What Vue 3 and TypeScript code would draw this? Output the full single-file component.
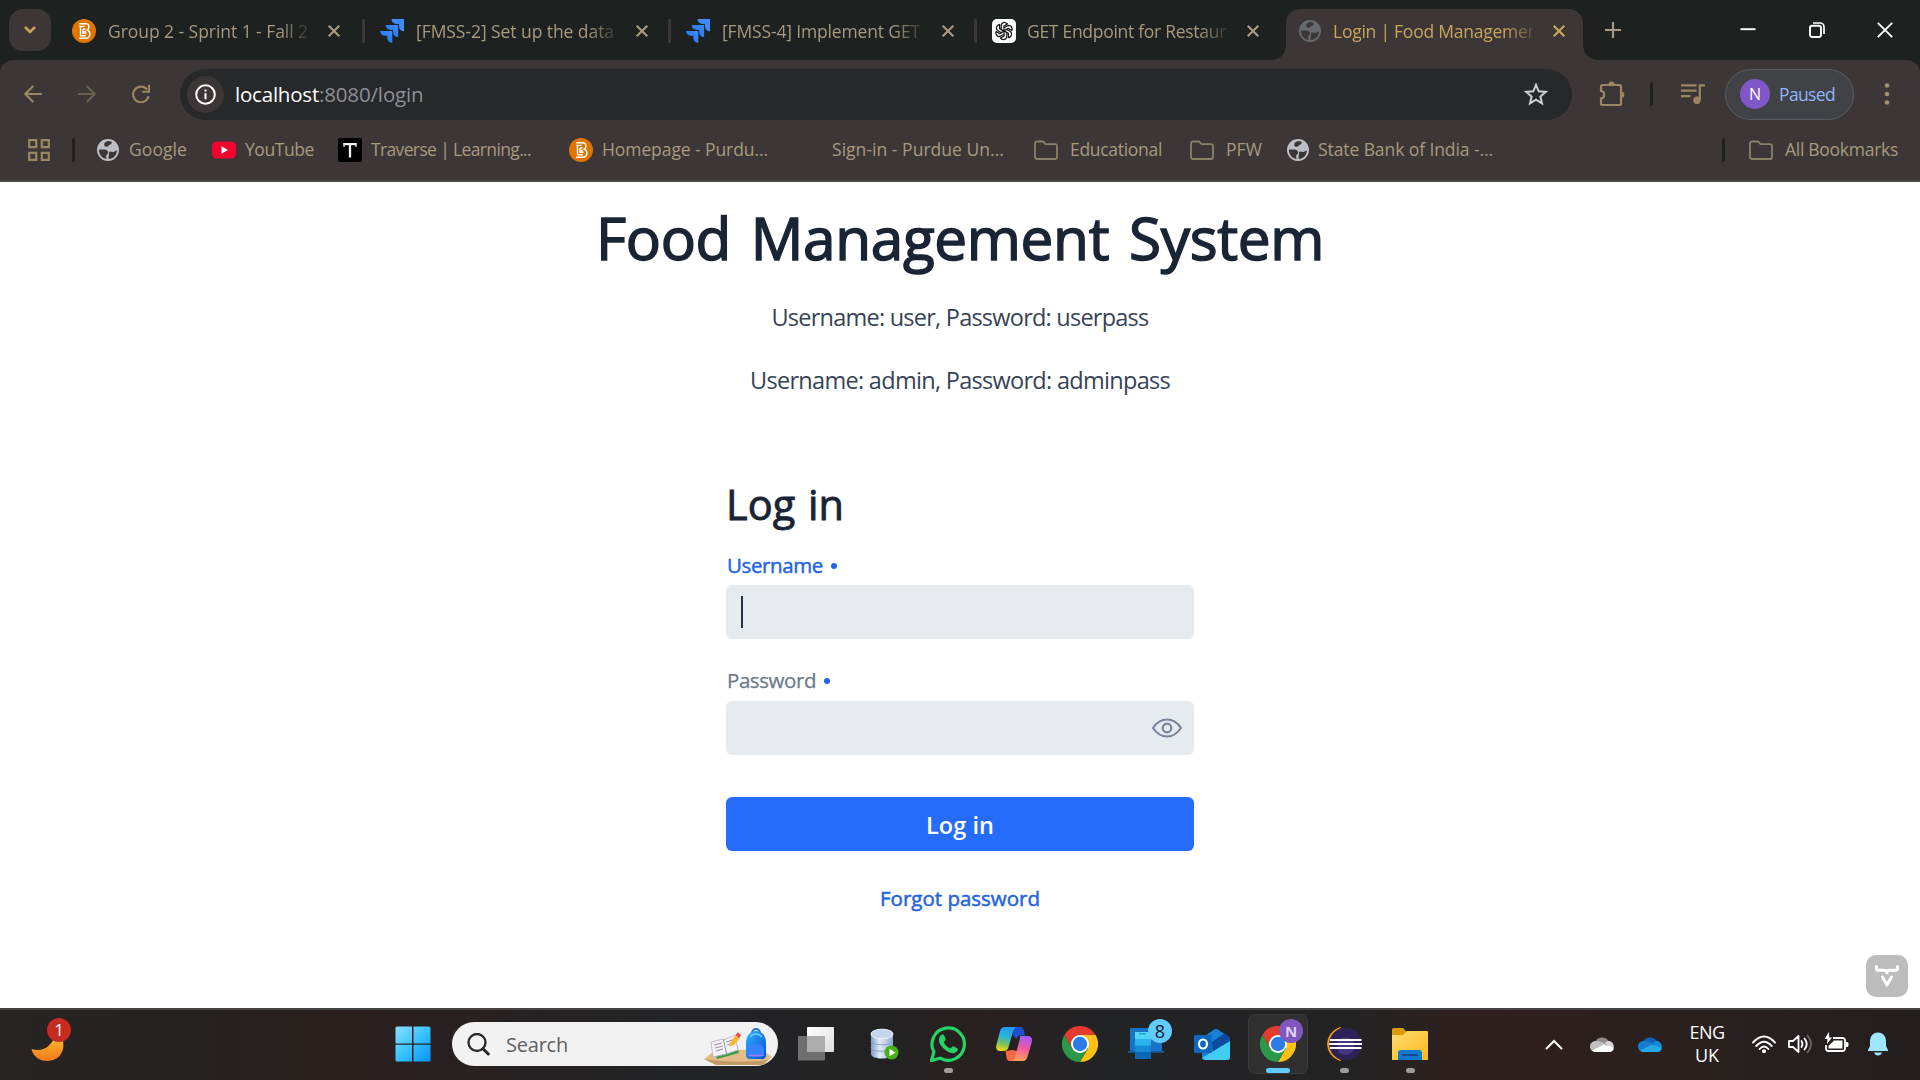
<script setup lang="ts">
import type { Directive } from 'vue'

interface Tab { icon: string; title: string; width: number; active?: boolean }
interface Bookmark { icon: string; label: string; width: number; left: number }

// Tracks a label so that it fills the given width in pixels.
const vFit: Directive<HTMLElement, number> = {
  mounted(el, binding) {
    const natural = el.getBoundingClientRect().width
    const count = (el.textContent ?? '').trim().length
    el.style.letterSpacing = `${(binding.value - natural) / count}px`
  },
}

const tabs: Tab[] = [
  { icon: 'brightspace', title: 'Group 2 - Sprint 1 - Fall 2', width: 200 },
  { icon: 'jira', title: '[FMSS-2] Set up the data', width: 198 },
  { icon: 'jira', title: '[FMSS-4] Implement GET', width: 198 },
  { icon: 'gpt', title: 'GET Endpoint for Restaur', width: 199 },
  { icon: 'globe', title: 'Login | Food Managemen', width: 205, active: true },
]

const bookmarks: Bookmark[] = [
  { icon: 'globe', label: 'Google', width: 58, left: 21 },
  { icon: 'youtube', label: 'YouTube', width: 69, left: 25 },
  { icon: 'traverse', label: 'Traverse | Learning...', width: 160, left: 24 },
  { icon: 'brightspace', label: 'Homepage - Purdu...', width: 166, left: 38 },
  { icon: 'none', label: 'Sign-in - Purdue Un...', width: 172, left: 31 },
  { icon: 'folder', label: 'Educational', width: 92, left: 30 },
  { icon: 'folder', label: 'PFW', width: 36, left: 28 },
  { icon: 'globe', label: 'State Bank of India -...', width: 175, left: 24 },
]
</script>

<template>
  <div class="screen">
    <svg class="defs" width="0" height="0" aria-hidden="true">
      <defs>
        <linearGradient id="jg" x1="1" y1="0" x2="0" y2="1"><stop offset="0" stop-color="#3d8bff" /><stop offset=".5" stop-color="#2f7df5" /><stop offset="1" stop-color="#1a5fd8" /></linearGradient>
        <linearGradient id="moon" x1="0" y1="0" x2="0" y2="1"><stop offset="0" stop-color="#fcc63d" /><stop offset="1" stop-color="#f37a18" /></linearGradient>
        <linearGradient id="win" x1="0" y1="0" x2="1" y2="1"><stop offset="0" stop-color="#8be0ff" /><stop offset=".5" stop-color="#39c2ff" /><stop offset="1" stop-color="#0591ff" /></linearGradient>
        <linearGradient id="bag" x1="0" y1="0" x2="1" y2="1"><stop offset="0" stop-color="#2bb1ff" /><stop offset="1" stop-color="#0a4fd0" /></linearGradient>
        <linearGradient id="db" x1="0" x2="1"><stop offset="0" stop-color="#7f9fcb" /><stop offset=".4" stop-color="#e2ecf9" /><stop offset="1" stop-color="#8ba8d1" /></linearGradient>
        <linearGradient id="cpA" x1=".5" y1="0" x2=".3" y2="1"><stop offset="0" stop-color="#1e9df0" /><stop offset=".4" stop-color="#2ab4d8" /><stop offset=".7" stop-color="#7ac15a" /><stop offset="1" stop-color="#f3d51c" /></linearGradient>
        <linearGradient id="cpB" x1=".6" y1="0" x2=".4" y2="1"><stop offset="0" stop-color="#a45bf5" /><stop offset=".5" stop-color="#f05c9c" /><stop offset="1" stop-color="#ffa45c" /></linearGradient>
        <linearGradient id="fold" x1="0" y1="0" x2="1" y2="1"><stop offset="0" stop-color="#ffdc71" /><stop offset="1" stop-color="#fbb91c" /></linearGradient>
        <linearGradient id="tv" x1="0" y1="0" x2="1" y2="1"><stop offset="0" stop-color="#fff" /><stop offset="1" stop-color="#dedede" /></linearGradient>
        <symbol id="i-brightspace" viewBox="0 0 24 24">
          <circle cx="12" cy="12" r="12" fill="#e07400" />
          <path d="M7.2 4.8h6.3c2.3 0 3.4 1.400 3.400 3.100 0 1.500-.6 2.500-1.700 3.200 1.700.6 2.700 1.900 2.700 3.800 0 2.600-1.600 4.300-4.400 4.300H7.200" fill="none" stroke="#fff" stroke-width="1.500" />
          <path d="M7.200 7.400h5.500M8.500 7.400v9.300M11 10h2.500M11 12.600h3M11 10v4.200h3.500M8.500 16.700h5.300" fill="none" stroke="#fff" stroke-width="1.400" />
        </symbol>
        <symbol id="i-jira" viewBox="0 0 24 24">
          <path d="M11.500 0H24v12.500a5 5 0 0 1-5-5V5h-2.500a5 5 0 0 1-5-5z" fill="#3d8bff" />
          <path d="M5.700 6h12.400v12.300a5 5 0 0 1-5-5V11h-2.400a5 5 0 0 1-5-5z" fill="url(#jg)" />
          <path d="M0 12h12.300v12a5 5 0 0 1-5-5v-2.200H5a5 5 0 0 1-5-4.800z" fill="url(#jg)" />
        </symbol>
        <symbol id="i-gpt" viewBox="0 0 24 24">
          <rect width="24" height="24" rx="5" fill="#fff" />
          <g fill="none" stroke="#161616" stroke-width="1.250" stroke-linejoin="round">
            <path v-for="n in 6" :key="n" :transform="`rotate(${n * 60} 12 12)`" d="M9.200 10.300V6.800c0-2.100 1.700-3.400 3.500-3.300 1.300 0 2.200.6 2.800 1.400L11.900 7v5" />
          </g>
        </symbol>
        <symbol id="i-globe" viewBox="0 0 24 24">
          <circle cx="12" cy="12" r="11" fill="currentColor" />
          <path class="land" d="M2.900 11.500c2.300.3 4-.4 6 .1 2.200.6 3.400 1.700 3.200 3.300-.2 1.400-1.700 1.500-1.900 2.700-.2 1.100.2 2 .4 3.400-4.700-.6-7.800-4.600-7.700-9.500zM12 2.900c-2.700.6-4 2.300-3.800 4.200.2 1.600 1.600 1.900 2.900 1.700 1.400-.3 1.400-1.800 2.700-2.100 1.200-.3 2-1 1.900-3-1.200-.6-2.400-.8-3.700-.8zM21 12.400c-1.600.2-2.400 1.400-3.900 1.600-1.500.1-2.500-.8-3.700-.2-.9.700-.1 2-.5 3.300-.3 1.200-.6 2.400-.2 3.900 4.700-.4 8-3.700 8.300-8.600z" />
        </symbol>
        <symbol id="i-youtube" viewBox="0 0 24 24"><rect y="3.500" width="24" height="17" rx="4.500" fill="#f5002f" /><path d="M9.500 8.300v7.400l6.500-3.700z" fill="#fff" /></symbol>
        <symbol id="i-traverse" viewBox="0 0 24 24"><rect width="24" height="24" rx="2" fill="#000" /><path d="M6 5v4M18 5v4" fill="none" stroke="#f2f2f2" stroke-width="1.200" /><path d="M5.500 6.200h13M12 6v13.500" fill="none" stroke="#f2f2f2" stroke-width="2.300" /></symbol>
        <symbol id="i-folder" viewBox="0 0 24 24"><path d="M3 3.500h6l2.500 2.600H21a2 2 0 0 1 2 2V19a2 2 0 0 1-2 2H3a2 2 0 0 1-2-2V5.500a2 2 0 0 1 2-2z" fill="none" stroke="#8a8069" stroke-width="1.800" /></symbol>
        <symbol id="i-chrome" viewBox="0 0 36 36">
          <path d="M2.400 9l7.800 13.500L18 18V9h15.600A18 18 0 0 0 2.400 9z" fill="#e33b2e" />
          <path d="M18 9h15.600A18 18 0 0 1 18 36l7.800-13.500z" fill="#fbc116" />
          <path d="M25.800 22.500L18 36A18 18 0 0 1 2.400 9l7.800 13.500z" fill="#2a9a4a" />
          <circle cx="18" cy="18" r="9" fill="#fff" /><circle cx="18" cy="18" r="7.200" fill="#2b7bea" />
        </symbol>
        <symbol id="i-cloud" viewBox="0 0 24 16">
          <path class="c1" d="M5 6.500A7.500 7.500 0 0 1 18.500 5L14 10 3 8z" />
          <path class="c2" d="M5.500 5C2.500 5 0 7.400 0 10.500S2.300 16 5.500 16L16 8.500C11 4.800 8.500 5 5.500 5z" />
          <path class="c3" d="M18.500 5c-1.500 0-2.500.5-4 2.200l6 6 3-1C24.600 9 22.300 5 18.500 5z" />
          <path class="c4" d="M2 14.500l12-6 9.800 3.300c0 2.400-1.800 4.200-4.200 4.200H5.500c-1.500 0-2.600-.6-3.500-1.500z" />
        </symbol>
      </defs>
    </svg>

    <header class="browser">
      <div class="strip">
        <button class="tab-search"><svg width="14" height="10" viewBox="0 0 14 10"><path d="M2 2l5 5 5-5" fill="none" stroke="#c9a45c" stroke-width="2.500" /></svg></button>
        <div class="tabs">
          <div v-for="(tab, i) in tabs" :key="i" class="tab" :class="{ active: tab.active, ruled: i < 3 }">
            <svg class="fav" viewBox="0 0 24 24"><use :href="`#i-${tab.icon}`" /></svg>
            <div class="title"><span v-fit="tab.width">{{ tab.title }}</span></div>
            <svg class="x" width="14" height="14" viewBox="0 0 14 14"><path d="M1.700 1.700l10.600 10.600M12.300 1.700L1.700 12.300" fill="none" stroke="currentColor" stroke-width="2.200" /></svg>
          </div>
        </div>
        <svg class="plus" width="16" height="16" viewBox="0 0 16 16"><path d="M8 0v16M0 8h16" stroke="#a8997f" stroke-width="2.200" /></svg>
        <div class="window-controls">
          <svg width="16" height="16" viewBox="0 0 16 16"><path d="M0.500 7.200h15" stroke="#fff" stroke-width="1.900" /></svg>
          <svg width="16" height="16" viewBox="0 0 16 16"><rect x="1" y="3.700" width="11" height="11.300" rx="2.200" fill="none" stroke="#fff" stroke-width="1.900" /><path d="M4 1h7a4 4 0 0 1 4 4v7" fill="none" stroke="#fff" stroke-width="1.700" /></svg>
          <svg width="16" height="16" viewBox="0 0 16 16"><path d="M.8.800l14.400 14.400M15.200.800L.8 15.200" stroke="#fff" stroke-width="1.900" /></svg>
        </div>
      </div>

      <div class="panel">
        <div class="toolbar">
          <div class="nav">
            <svg width="18" height="18" viewBox="0 0 18 18"><path d="M18 9H1.500M9.300 1L1.300 9l8 8" fill="none" stroke="#9a8761" stroke-width="2.100" /></svg>
            <svg width="18" height="18" viewBox="0 0 18 18"><path d="M0 9h16.500M8.700 1l8 8-8 8" fill="none" stroke="#6a604c" stroke-width="2.100" /></svg>
            <svg width="18" height="18" viewBox="0 0 18 18"><path d="M15 4.500A7.800 7.800 0 1 0 16.600 11M17 0v6.800h-6.800" fill="none" stroke="#9a8761" stroke-width="2.100" /></svg>
          </div>
          <div class="address">
            <span class="info"><svg width="21" height="21" viewBox="0 0 21 21"><circle cx="10.500" cy="10.500" r="9.300" fill="none" stroke="#fff" stroke-width="2" /><path d="M10.500 9.300v6M10.500 5.400v2.200" stroke="#fff" stroke-width="2" /></svg></span>
            <span class="url"><span class="host" v-fit="84">localhost</span><span v-fit="104.500">:8080/login</span></span>
            <svg class="star" width="24" height="24" viewBox="0 0 24 24"><path d="M12 2.800l2.700 6.500 7 .6-5.300 4.600 1.600 6.900-6-3.700-6 3.700 1.600-6.900-5.300-4.600 7-.6z" fill="none" stroke="#cfcfcf" stroke-width="2" /></svg>
          </div>
          <svg class="ext" width="26" height="26" viewBox="0 0 26 26"><path d="M3.500 4h17A1.500 1.500 0 0 1 22 5.500v17a1.500 1.500 0 0 1-1.500 1.500h-17A1.500 1.500 0 0 1 2 22.500V17.500c4.200 0 4.200-7.500 0-7.500V5.500A1.500 1.500 0 0 1 3.500 4z" fill="none" stroke="#9a8761" stroke-width="2.200" /><path d="M9.500 3.500a3 3 0 0 1 6 0zM22 10.500a3.300 3.300 0 0 1 0 6.600z" fill="#9a8761" /></svg>
          <i class="rule"></i>
          <svg class="queue" width="24" height="22" viewBox="0 0 24 22"><path d="M0 2.300h15.500M0 7.700h15.500M0 13.100h9.500M18.800 2.300H24M18.800 1.200v15.500" fill="none" stroke="#9a8761" stroke-width="2.200" /><circle cx="16" cy="17.200" r="3.700" fill="#9a8761" /></svg>
          <div class="profile"><span class="avatar">N</span><span v-fit="56">Paused</span></div>
          <svg class="dots" width="6" height="26" viewBox="0 0 6 26"><g fill="#a39172"><circle cx="3" cy="4.500" r="2.300" /><circle cx="3" cy="13" r="2.300" /><circle cx="3" cy="21.500" r="2.300" /></g></svg>
        </div>
        <div class="bookmarks">
          <svg width="22" height="22" viewBox="0 0 22 22"><path d="M1.200 1.200h7v7h-7zM13.800 1.200h7v7h-7zM1.200 13.800h7v7h-7zM13.800 13.800h7v7h-7z" fill="none" stroke="#9a8761" stroke-width="2.200" /></svg>
          <i class="rule first"></i>
          <div v-for="b in bookmarks" :key="b.label" class="bookmark" :style="{ marginLeft: `${b.left}px` }">
            <svg v-if="b.icon !== 'none'" class="fav" viewBox="0 0 24 24"><use :href="`#i-${b.icon}`" /></svg>
            <span v-else class="fav"></span>
            <span class="name" v-fit="b.width">{{ b.label }}</span>
          </div>
          <i class="rule last"></i>
          <div class="bookmark all"><svg class="fav" viewBox="0 0 24 24"><use href="#i-folder" /></svg><span class="name" v-fit="113">All Bookmarks</span></div>
        </div>
      </div>
    </header>

    <main class="page">
      <h1><span v-fit="728">Food Management System</span></h1>
      <p><span v-fit="377">Username: user, Password: userpass</span></p>
      <p><span v-fit="420">Username: admin, Password: adminpass</span></p>
      <form class="login" @submit.prevent>
        <h2><span v-fit="118">Log in</span></h2>
        <label class="focused"><span v-fit="96">Username</span><i></i></label>
        <div class="field"><b class="caret"></b></div>
        <label><span v-fit="89">Password</span><i></i></label>
        <div class="field secret">
          <svg width="30" height="20" viewBox="0 0 30 20"><path d="M1 10C5 4 10 1.500 15 1.500S25 4 29 10c-4 6-9 8.500-14 8.500S5 16 1 10z" fill="none" stroke="#76849a" stroke-width="2" stroke-linejoin="round" /><circle cx="15" cy="10" r="4.300" fill="none" stroke="#76849a" stroke-width="2.200" /></svg>
        </div>
        <button class="submit"><span v-fit="68">Log in</span></button>
        <a class="forgot"><span v-fit="160">Forgot password</span></a>
      </form>
      <div class="vaadin"><svg width="24" height="22" viewBox="0 0 24 22"><path d="M1.500 1.500v2q0 1.700 1.700 1.700h5.600q3.200 0 3.200 2.500 0-2.500 3.200-2.500h5.600q1.700 0 1.700-1.700v-2M7.500 12l4.500 8 4.500-8" fill="none" stroke="#fff" stroke-width="3" stroke-linecap="round" stroke-linejoin="round" /></svg></div>
    </main>

    <footer class="taskbar">
      <div class="weather">
        <svg width="34" height="36" viewBox="0 0 34 36"><path d="M26 5C37 14 34 35 16.500 35 8.500 35 2 30.500.5 23 12 26.500 21 21 26 5z" fill="url(#moon)" /></svg>
        <span class="count red">1</span>
      </div>
      <svg class="start" width="36" height="36" viewBox="0 0 36 36"><path d="M2 .5h15v17H.5V2A1.500 1.500 0 0 1 2 .5zM18.500.5H34A1.500 1.500 0 0 1 35.500 2v15.500h-17zM.5 18.800H17v16.700H2A1.500 1.500 0 0 1 .5 34zM18.500 18.800h17V34a1.500 1.500 0 0 1-1.500 1.500H18.500z" fill="url(#win)" /></svg>
      <div class="search">
        <svg width="23" height="23" viewBox="0 0 23 23"><circle cx="10" cy="9.500" r="8.500" fill="none" stroke="#26292b" stroke-width="2.300" /><path d="M16 15.700l5.300 5.300" stroke="#26292b" stroke-width="3" stroke-linecap="round" /></svg>
        <span v-fit="62">Search</span>
        <svg class="art" width="68" height="37" viewBox="0 0 68 37">
          <path d="M0 31L9 24Q34 20 60 23l8 6-8 7-10 1H14z" fill="#e2bd8a" /><path d="M0 31q30 5 64 1l-5 5H12z" fill="#c39965" />
          <path d="M7 15l24-6 4 16-22 6z" fill="#3f9e48" /><path d="M7 14l12-3 1 1 11-5 3 15-12 4-13 3z" fill="#f7f2fa" stroke="#b9adca" stroke-width=".8" /><path d="M19.500 11.500l3 14.500M10 17l8-2M11 20l8-2M12 23l7-2M22 14l8-2.500M23 17l7-2" fill="none" stroke="#8b8298" stroke-width=".9" />
          <path d="M25 18.500l1.500-4.500 5.500-7 4 3-6 7z" fill="#f9b62d" /><path d="M31.500 7l2.300-2.700 3.500 3-2.300 2.700z" fill="#ef5148" />
          <path d="M48 5a4 4 0 0 1 8 0" fill="none" stroke="#1e78d6" stroke-width="2" /><path d="M42 15c0-7 4-12 10-12s10 5 10 12v12a4 4 0 0 1-4 4H46a4 4 0 0 1-4-4z" fill="url(#bag)" /><path d="M46 9c3-4 9-4 12 0" fill="none" stroke="#76cdff" stroke-width="1.300" /><path d="M44 22c0-8 16-8 16 0v6q-8 1-16 0z" fill="#3584ff" /><path d="M45 27.500h14" stroke="#a776ef" stroke-width="1.500" />
        </svg>
      </div>
      <nav class="apps">
        <div class="app"><svg width="36" height="36" viewBox="0 0 36 36"><rect x="9" y="1" width="27" height="25" rx="1" fill="url(#tv)" /><rect x="0" y="10" width="27" height="24.500" rx="1" fill="#6f6f6f" /><path d="M9 10h18v16H9z" fill="#adadad" /></svg></div>
        <div class="app"><svg width="36" height="36" viewBox="-1 0 36 36"><path d="M6 8v20c0 6 22 6 22 0V8z" fill="url(#db)" /><ellipse cx="17" cy="8" rx="11" ry="4.800" fill="#c4d5ec" stroke="#f0f6ff" stroke-width="1" /><path d="M6 15c1 5 21 5 22 0M6 21.500c1 5 21 5 22 0" fill="none" stroke="#8aa3c6" stroke-width="1.200" /><circle cx="26.500" cy="26.500" r="7" fill="#44b119" /><path d="M24.500 22.800v7.400l6-3.700z" fill="#fff" /></svg></div>
        <div class="app running"><svg width="36" height="36" viewBox="0 0 36 36"><path d="M1.500 34.500l2.400-8.700A16.200 16.200 0 1 1 10.100 32.200z" fill="none" stroke="#25d366" stroke-width="3.200" /><path d="M9 15.800c0-3.500 1.600-5.900 3.500-5.900 1 0 1.300.3 1.700 1.200l1.400 3.300c.2.800-.1 1.300-1.900 3.300 1.500 3 3.700 5 6.900 6.400 2-2.200 2.100-2.500 2.900-2.200l3.500 1.700c.7.400.9.700.7 1.700-.4 2.300-2.700 3.500-4.900 3.500C17.500 28.500 9 21.500 9 15.800z" transform="translate(0 -1.500)" fill="#25d366" /></svg></div>
        <div class="app"><svg width="36" height="36" viewBox="0 0 36 36"><path d="M17 1h7.500c2 0 3 2 3.500 4l1 4.500h-4.500c-2 0-3.500 1.500-4 3.500L17 9z" fill="#1e4fd0" /><path d="M10 35h8c2 0 4-1.500 4.600-4L24 26l-7-2-7.500 1 1 6c.4 2 .5 4 3.500 4z" fill="#f46b43" /><path d="M9 1h12c-2.500.5-3.300 2-4 4.500l-4.600 16C11.700 24 10 25 8 25H4c-3 0-4.500-2.500-3.600-6L4 5c.7-2.500 2.500-4 5-4z" fill="url(#cpA)" /><path d="M24 10h8c3 0 4.600 2.500 3.800 6l-4 14c-.8 3.500-2.500 5-5 5H15c2.500-.3 3.500-2 4.200-4.500L23.500 14c.4-1.800.5-3 .5-4z" fill="url(#cpB)" /></svg></div>
        <div class="app"><svg width="36" height="36"><use href="#i-chrome" /></svg></div>
        <div class="app"><svg width="36" height="36" viewBox="0 0 36 36"><rect x="2" y="2" width="32" height="23" rx="1" fill="#1673c3" /><path d="M0 25h36v1.800H0z" fill="#135c9c" /><path d="M7 6h16v8H7z" fill="#50d5f6" /><path d="M7 13h16v7H7z" fill="#2ab4ea" /><path d="M7 19.500h16v7H7z" fill="#1689d8" /><path d="M7 26h16v7H7z" fill="#0967b5" /><path d="M11 7.800h7" stroke="#1d8aae" /></svg><span class="count blue">8</span></div>
        <div class="app"><svg width="36" height="36" viewBox="0 0 36 36"><path d="M8 12L20 3.500q2-1.200 4 0L36 12v19a3 3 0 0 1-3 3H11a3 3 0 0 1-3-3z" fill="#1680d5" /><path d="M18 16L31 7l5 5v8L19 27z" fill="#0a4b9b" /><path d="M8 32l28-17v16a3 3 0 0 1-3 3H11z" fill="#42cdf5" /><rect y="9" width="18" height="18" rx="1.500" fill="#0d68bc" /><ellipse cx="9" cy="18" rx="4" ry="4.500" fill="none" stroke="#fff" stroke-width="2.200" /></svg></div>
        <div class="app current"><svg width="36" height="36"><use href="#i-chrome" /></svg><span class="count violet">N</span></div>
        <div class="app running"><svg width="36" height="36" viewBox="0 0 36 36"><path d="M14.500 1.500A17 17 0 0 0 14.500 34.500 19 19 0 0 1 14.500 1.500z" fill="#f7941e" stroke="#f7941e" /><circle cx="19.500" cy="18" r="16.300" fill="#2c2255" /><circle cx="19.500" cy="20" r="9" fill="#443680" /><path d="M4 14h31.500M3.200 18H36M4 22h31.500" stroke="#fff" stroke-width="1.900" /></svg></div>
        <div class="app running"><svg width="36" height="36" viewBox="0 0 36 36"><path d="M0 3.500A1.500 1.500 0 0 1 1.500 2H11l4 4h20a1 1 0 0 1 1 1v6H0z" fill="#dc9c07" /><path d="M0 9h11l4-4h20a1 1 0 0 1 1 1v28H0z" fill="url(#fold)" /><path d="M6 34v-7a3 3 0 0 1 3-3h18a3 3 0 0 1 3 3v7z" fill="#0f7ad0" /><path d="M11 29h14" stroke="#0a4b88" stroke-width="1.800" stroke-linecap="round" /></svg></div>
      </nav>
      <div class="tray">
        <svg class="chev" width="18" height="11" viewBox="0 0 18 11"><path d="M1.500 9.500L9 2l7.500 7.500" fill="none" stroke="#fff" stroke-width="2" stroke-linecap="round" /></svg>
        <svg class="cloud grey" width="24" height="16"><use href="#i-cloud" /></svg>
        <svg class="cloud azure" width="24" height="16"><use href="#i-cloud" /></svg>
        <div class="lang"><span v-fit="35">ENG</span><span v-fit="24">UK</span></div>
        <svg class="wifi" width="24" height="19" viewBox="0 0 24 19"><path d="M1 7.500Q12-4.500 23 7.500M4.300 11Q12 2.500 19.700 11M7.700 14Q12 9 16.300 14" fill="none" stroke="#fff" stroke-width="1.900" stroke-linecap="round" /><circle cx="12" cy="16.300" r="2" fill="#fff" /></svg>
        <svg class="vol" width="26" height="20" viewBox="0 0 26 20"><path d="M1 7v6h4l5.500 5V2L5 7z" fill="none" stroke="#fff" stroke-width="1.800" stroke-linejoin="round" /><path d="M13.500 7q2 3 0 6M16.500 4.500q4.500 5.500 0 11" fill="none" stroke="#fff" stroke-width="1.800" stroke-linecap="round" /><path d="M19.500 1.500q7 8.500 0 17" fill="none" stroke="#6a6563" stroke-width="1.800" stroke-linecap="round" /></svg>
        <svg class="bat" width="25" height="21" viewBox="0 0 25 21"><path d="M9 6h9.500a2.500 2.500 0 0 1 2.500 2.500v8a2.500 2.500 0 0 1-2.500 2.500h-14A2.500 2.500 0 0 1 2 16.500V13" fill="none" stroke="#fff" stroke-width="1.800" /><path d="M10 8.500h8.500v8h-14V14z" fill="#fff" /><path d="M22 10h1a1.500 1.500 0 0 1 1.500 1.500v2A1.500 1.500 0 0 1 23 15h-1zM5 0L.5 7h3L3 12l5-6.500H5.200z" fill="#fff" /></svg>
        <svg class="bell" width="20" height="24" viewBox="0 0 20 24"><path d="M10 .5a8 8 0 0 1 8 8V14l2 4v1H0v-1l2-4V8.500a8 8 0 0 1 8-8zM6 20.500h8c-.6 2-2 3-4 3s-3.400-1-4-3z" fill="#9ee7ff" /></svg>
      </div>
    </footer>
  </div>
</template>

<style>
html, body { margin: 0; background: #fff; overflow: hidden; }
</style>

<style scoped>
* { box-sizing: border-box; }
.screen { width: 1920px; height: 1080px; display: flex; flex-direction: column; font-family: "Open Sans", "Noto Sans", sans-serif; overflow: hidden; background: #fff; white-space: nowrap; }
.defs { position: absolute; }
svg { display: block; flex: none; }
button { border: 0; padding: 0; font: inherit; }
.browser { height: 182px; flex: none; background: #1d2120; }
.strip { height: 60px; display: flex; align-items: center; }
.tab-search { width: 42px; height: 42px; margin-left: 9px; border-radius: 14px; background: #3c3736; display: flex; align-items: center; justify-content: center; }
.tabs { display: flex; margin-left: 6px; align-self: flex-end; }
.tab { position: relative; width: 306px; height: 51px; padding: 0 22px 8px 15px; display: flex; align-items: center; color: #a8997f; font-size: 17.500px; }
.tab:nth-child(n+2) { padding-left: 17px; }
.tab .title { width: 200px; flex: none; margin-left: 12px; overflow: hidden; line-height: 26px; -webkit-mask-image: linear-gradient(90deg, #000 172px, transparent 206px); mask-image: linear-gradient(90deg, #000 172px, transparent 206px); }
.tab:nth-child(n+4) .title { margin-left: 11px; }
.tab .x { margin-left: 19px; }
.tab.ruled::after { content: ""; position: absolute; right: -2px; top: 10px; width: 3px; height: 24px; border-radius: 1px; background: #3c3736; }
.fav { width: 24px; height: 24px; flex: none; }
.land { fill: #3c3736; }
.tab.active { width: 297px; margin-left: 5px; padding: 0 0 8px 12px; background: #3c3736; border-radius: 14px 14px 0 0; color: #c9a45c; }
.tab.active .fav { color: #646a70; }
.tab.active .x { margin-left: 19px; }
.tab.active::before, .tab.active::after { content: ""; position: absolute; bottom: 0; width: 14px; height: 14px; }
.tab.active::before { left: -14px; background: radial-gradient(circle at 0 0, transparent 13.500px, #3c3736 14px); }
.tab.active::after { right: -14px; background: radial-gradient(circle at 100% 0, transparent 13.500px, #3c3736 14px); }
.plus { margin-left: 22px; }
.window-controls { margin: 0 27px 0 auto; display: flex; gap: 52.500px; }
.panel { height: 122px; background: #3c3736; border-radius: 13px 13px 0 0; border-bottom: 2px solid #4f4742; }
.toolbar { display: flex; align-items: center; height: 68px; }
.nav { display: flex; gap: 36px; margin-left: 24px; width: 156px; }
.address { width: 1392px; height: 51px; border-radius: 26px; background: #26282a; display: flex; align-items: center; padding: 0 24px 0 7px; }
.info { width: 37px; height: 37px; border-radius: 50%; background: #3c3736; display: flex; align-items: center; justify-content: center; }
.url { margin-left: 11px; color: #8d9095; font-size: 20.500px; line-height: 30px; }
.host { color: #fff; }
.star { margin-left: auto; }
.ext { margin-left: 27px; }
.rule { width: 3px; height: 24px; border-radius: 2px; background: #1d2120; flex: none; margin-left: 25px; }
.queue { margin-left: 28px; }
.profile { margin-left: 20px; width: 129px; height: 51px; border: 1.500px solid #595c61; border-radius: 26px; background: #404246; color: #8fb6fb; font-size: 17.500px; display: flex; align-items: center; padding-left: 14px; gap: 9px; }
.avatar { width: 30px; height: 30px; border-radius: 50%; background: #7f57c8; color: #fff; font-size: 16px; display: flex; align-items: center; justify-content: center; }
.dots { margin-left: 30px; }
.bookmarks { display: flex; align-items: center; height: 44px; padding-left: 28px; color: #a8997f; font-size: 17.500px; line-height: 26px; }
.bookmark { display: flex; align-items: center; gap: 9px; }
.bookmark .fav { color: #bcc0c6; }
.bookmark .name { padding-bottom: 2px; }
.bookmark:nth-child(n+8) { gap: 12px; }
.bookmark:nth-child(10) { gap: 8px; }
.rule.first { margin-left: 22px; }
.rule.last { margin-left: auto; }
.bookmark.all { margin: 0 22px 0 24px; gap: 12px; }
.page { position: relative; flex: 1; display: flex; flex-direction: column; align-items: center; background: #fff; }
h1, h2, p { margin: 0; }
h1 { margin-top: 15px; font-size: 58.500px; line-height: 80px; font-weight: 400; word-spacing: 5px; -webkit-text-stroke: 1.500px #192434; color: #192434; }
p { margin-top: 23px; font-size: 23.500px; line-height: 34px; color: #364357; }
p + p { margin-top: 29px; }
.login { width: 468px; display: flex; flex-direction: column; }
h2 { margin-top: 82px; font-size: 41.500px; line-height: 50px; font-weight: 400; word-spacing: 2px; -webkit-text-stroke: .9px #192434; color: #192434; }
label { margin: 28px 0 8px; padding-left: 1px; display: flex; align-items: center; font-size: 20.500px; line-height: 26px; -webkit-text-stroke: .25px currentColor; color: #6c788b; }
label.focused { margin: 23px 0 7px; color: #2464dc; -webkit-text-stroke-width: .45px; }
label i { width: 6px; height: 6px; margin: 2px 0 0 8px; border-radius: 50%; background: #2464e8; }
.field { height: 54px; border-radius: 6px; background: #e7eaef; display: flex; align-items: center; }
.caret { width: 2px; height: 32px; margin-left: 15px; background: #263449; }
.secret { justify-content: flex-end; padding-right: 12px; }
.submit { margin-top: 42px; height: 54px; padding-top: 2px; border-radius: 6px; background: #246cf9; color: #fff; font-size: 23.500px; line-height: 34px; font-weight: 600; }
.forgot { margin-top: 34px; align-self: center; color: #2464dc; font-size: 20.500px; line-height: 26px; -webkit-text-stroke: .5px #2464dc; }
.vaadin { position: absolute; right: 12px; bottom: 11px; width: 42px; height: 42px; border-radius: 10px; background: #bdbdbd; display: flex; align-items: center; justify-content: center; }
.taskbar { height: 72px; flex: none; display: flex; align-items: center; border-top: 2px solid #454343; background: linear-gradient(90deg, #272423 0, #24211f 200px, #2b1f1e 350px, #232426 660px, #222223 880px, #2a2020 980px, #222325 1100px, #232324 1350px, #301f1c 1490px, #2b201e 1620px, #231f1e 1920px); }
.weather { position: relative; width: 364px; padding-left: 31px; }
.count { position: absolute; width: 24px; height: 24px; border-radius: 50%; display: flex; align-items: center; justify-content: center; font-size: 18px; line-height: 24px; }
.red { left: 47px; top: -10px; background: #c52b1f; color: #fff; font-size: 17px; }
.weather svg { margin-top: -2px; }
.start { margin-left: 30.500px; margin-top: -2px; }
.search { margin: -2px 0 0 21.500px; width: 326px; height: 44px; border-radius: 22px; background: #f2f2f2; color: #5f5f5f; display: flex; align-items: center; padding-left: 15px; font-size: 20px; overflow: hidden; }
.search span { margin-left: 16px; }
.search .art { margin: 4px 6px 0 auto; }
.apps { display: flex; margin: -2px 0 0 5px; }
.app { position: relative; width: 66px; height: 60px; display: flex; align-items: center; justify-content: center; }
.app .count { left: 35px; top: 5px; }
.blue { background: #62cbff; color: #15232d; }
.app .violet { left: 34px; background: #7f57bf; color: #ded3ef; font-size: 15px; font-weight: 700; }
.app.current::before { content: ""; position: absolute; inset: 0 3px; border-radius: 7px; background: #303031; border: 1px solid #3b3b3c; }
.app.current svg { position: relative; }
.app.running::after, .app.current::after { content: ""; position: absolute; bottom: 1px; left: 28.500px; width: 9px; height: 5px; border-radius: 3px; background: #9d9b9b; }
.app.current::after { left: 21px; width: 24px; background: #62cbff; }
.tray { flex: 1; display: flex; align-items: center; padding-left: 102px; margin-top: -2px; color: #fff; }
.cloud { margin-left: 27px; }
.azure { margin-left: 24px; }
.grey { --a: #8f8b8a; --b: #c2bfbe; --c: #d8d6d6; --d: #fff; }
.azure { --a: #0863b8; --b: #147cd3; --c: #1489dc; --d: #28a8ea; }
.c1 { fill: var(--a); } .c2 { fill: var(--b); } .c3 { fill: var(--c); } .c4 { fill: var(--d); }
.lang { width: 60px; margin-left: 15px; display: flex; flex-direction: column; align-items: center; font-size: 18px; line-height: 23px; }
.wifi { margin-left: 15px; }
.vol { margin-left: 12px; }
.bat { margin-left: 10px; margin-top: -3px; }
.bell { margin-left: 19px; }
</style>
